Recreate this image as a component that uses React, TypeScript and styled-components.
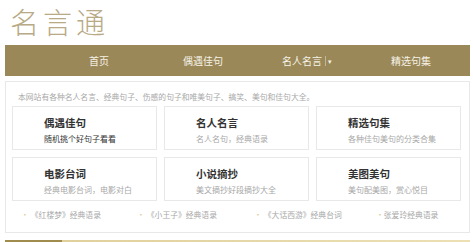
import React from "react";
import styled, { createGlobalStyle } from "styled-components";

const GlobalStyle = createGlobalStyle`
  html, body {
    margin: 0;
    padding: 0;
    background: #fff;
    font-family: "Noto Sans CJK SC", "Liberation Sans", sans-serif;
  }
`;

const navItems = [
  { label: "首页" },
  { label: "偶遇佳句" },
  { label: "名人名言", dropdown: true },
  { label: "精选句集" },
];

const cards = [
  { title: "偶遇佳句", desc: "随机挑个好句子看看", strong: true },
  { title: "名人名言", desc: "名人名句，经典语录" },
  { title: "精选句集", desc: "各种佳句美句的分类合集" },
  { title: "电影台词", desc: "经典电影台词，电影对白" },
  { title: "小说摘抄", desc: "美文摘抄好段摘抄大全" },
  { title: "美图美句", desc: "美句配美图，赏心悦目" },
];

const links = [
  { text: "《红楼梦》经典语录", w: 116, gap: 2 },
  { text: "《小王子》经典语录", w: 117, gap: 2 },
  { text: "《大话西游》经典台词", w: 122, gap: 2 },
  { text: "张爱玲经典语录", w: 100, gap: 0 },
];

const App: React.FC = () => {
  return (
    <Page>
      <GlobalStyle />
      <Logo>名言通</Logo>
      <Nav>
        {navItems.map((item) => (
          <NavItem key={item.label}>
            {item.label}
            {item.dropdown && <Caret>▾</Caret>}
          </NavItem>
        ))}
      </Nav>
      <Panel>
        <Intro>本网站有各种名人名言、经典句子、伤感的句子和唯美句子、搞笑、美句和佳句大全。</Intro>
        <CardGrid>
          {cards.map((c) => (
            <Card key={c.title}>
              <CardTitle>{c.title}</CardTitle>
              <CardDesc strong={c.strong}>{c.desc}</CardDesc>
            </Card>
          ))}
        </CardGrid>
        <LinkRow>
          {links.map((l) => (
            <LinkItem key={l.text} w={l.w}>
              <Dot gap={l.gap}>•</Dot>
              {l.text}
            </LinkItem>
          ))}
        </LinkRow>
      </Panel>
      <BottomBar />
    </Page>
  );
};

export default App;

const Page = styled.div`
  width: 473px;
  height: 242px;
  overflow: hidden;
  padding: 0 3px 0 5px;
  box-sizing: border-box;
`;

const Logo = styled.div`
  height: 45px;
  padding-left: 5px;
  font-size: 29px;
  font-weight: 300;
  line-height: 42px;
  letter-spacing: 4px;
  color: #b8aa86;
`;

const Nav = styled.nav`
  display: flex;
  align-items: center;
  height: 31px;
  padding-left: 42px;
  background: #9a8858;
`;

const NavItem = styled.div`
  width: 104px;
  display: flex;
  justify-content: center;
  align-items: center;
  font-size: 10px;
  color: #f6f2e6;
`;

const Caret = styled.span`
  margin-left: 3px;
  font-size: 7px;
  color: #f6f2e6;
  border-left: 1px solid rgba(255, 255, 255, 0.4);
  padding-left: 2px;
`;

const Panel = styled.div`
  margin-top: 5px;
  height: 152px;
  box-sizing: border-box;
  border: 1px solid #e8e8e8;
  padding: 5px 6px 0 6px;
`;

const Intro = styled.div`
  height: 19px;
  line-height: 19px;
  padding-left: 6px;
  font-size: 7.8px;
  color: #a8a8a8;
`;

const CardGrid = styled.div`
  display: grid;
  grid-template-columns: repeat(3, 145px);
  grid-auto-rows: 44px;
  column-gap: 7px;
  row-gap: 7px;
`;

const Card = styled.div`
  border: 1px solid #e8e8e8;
  box-sizing: border-box;
  padding: 9px 0 0 31px;
`;

const CardTitle = styled.div`
  font-size: 10.5px;
  font-weight: 700;
  line-height: 14px;
  color: #333;
`;

const CardDesc = styled.div<{ strong?: boolean }>`
  margin-top: 3px;
  font-size: 8px;
  line-height: 12px;
  color: ${({ strong }) => (strong ? "#333" : "#a8a8a8")};
`;

const LinkRow = styled.div`
  display: flex;
  padding: 8px 0 0 9px;
`;

const LinkItem = styled.div<{ w: number }>`
  width: ${({ w }) => w}px;
  flex-shrink: 0;
  font-size: 7.8px;
  line-height: 12px;
  color: #a8a8a8;
  white-space: nowrap;
`;

const Dot = styled.span<{ gap: number }>`
  color: #dccb98;
  margin-right: ${({ gap }) => gap}px;
`;

const BottomBar = styled.div`
  margin-top: 7px;
  height: 3px;
  background: linear-gradient(to right, #a08c4c 0, #a08c4c 57px, #e0d09c 57px, #ece0b4 100%);
`;
